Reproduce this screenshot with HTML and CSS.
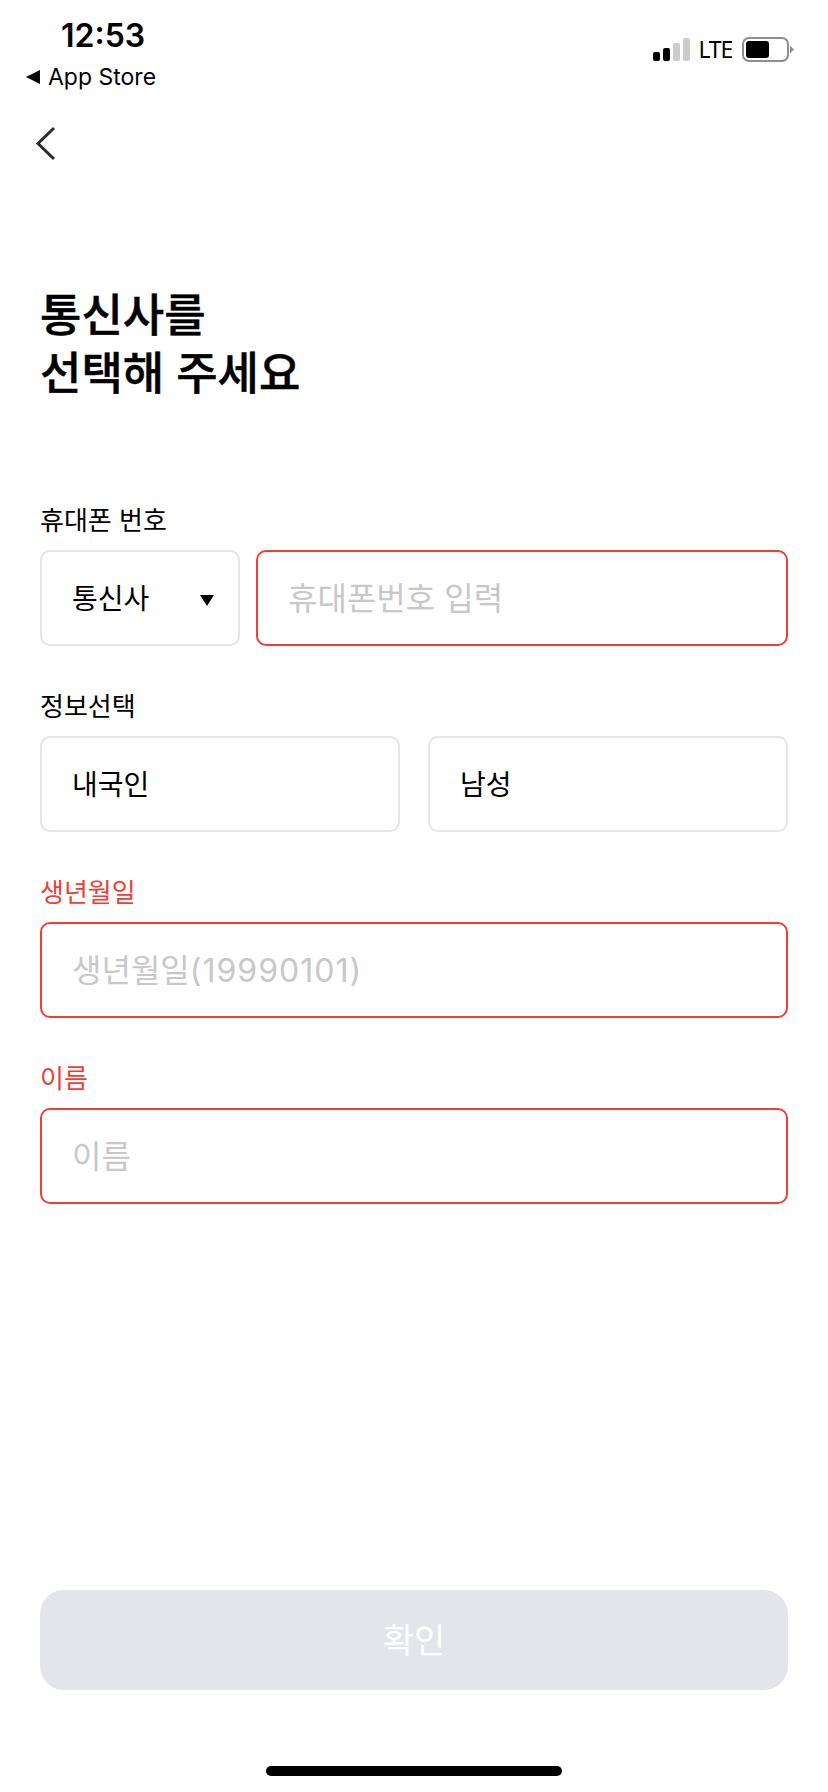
FILE: index.html
```html
<!DOCTYPE html>
<html lang="ko">
<head>
<meta charset="utf-8">
<title>통신사 선택</title>
<link rel="stylesheet" href="styles.css">
</head>
<body>
<div class="page">
  <header class="status">
    <div class="status-left">
      <div class="time">12:53</div>
      <div class="back-app"><span class="tri"></span><span>App Store</span></div>
    </div>
    <div class="status-right">
      <div class="bars"><i class="b1"></i><i class="b2"></i><i class="b3"></i><i class="b4"></i></div>
      <span class="lte">LTE</span>
      <div class="battery"><div class="level"></div></div>
      <div class="nub"></div>
    </div>
  </header>
  <nav class="nav">
    <svg class="chev" width="22" height="40" viewBox="0 0 22 40"><path d="M20 4 L4 19.5 L20 35" fill="none" stroke="#2b2b2b" stroke-width="3"/></svg>
  </nav>
  <h1 class="title">통신사를<br>선택해 주세요</h1>
  <form class="form">
    <div class="field">
      <div class="label">휴대폰 번호</div>
      <div class="row">
        <div class="box select"><span>통신사</span><span class="caret"></span></div>
        <div class="box error grow ph">휴대폰번호 입력</div>
      </div>
    </div>
    <div class="field">
      <div class="label">정보선택</div>
      <div class="row wide">
        <div class="box grow">내국인</div>
        <div class="box grow">남성</div>
      </div>
    </div>
    <div class="field">
      <div class="label red">생년월일</div>
      <div class="box error ph"><span>생년월일<span class="digits">(19990101)</span></span></div>
    </div>
    <div class="field">
      <div class="label red">이름</div>
      <div class="box error ph">이름</div>
    </div>
  </form>
  <div class="confirm">확인</div>
  <div class="home"></div>
</div>
</body>
</html>
```
FILE: styles.css
```css
* { box-sizing: border-box; }
html, body { margin: 0; padding: 0; background: #fff; }
body { font-family: Inter, "Noto Sans CJK KR", sans-serif; color: #000; }
.page { width: 828px; height: 1792px; display: flex; flex-direction: column; overflow: hidden; }

.status { height: 96px; padding: 0 34px 0 26px; display: flex; justify-content: space-between; align-items: flex-start; }
.status-left { display: flex; flex-direction: column; }
.time { font-weight: 600; font-size: 32px; line-height: 36px; margin: 18px 0 0 35px; }
.back-app { display: flex; align-items: center; gap: 8px; font-size: 23px; line-height: 28px; margin-top: 9px; }
.tri { width: 0; height: 0; border-top: 7px solid transparent; border-bottom: 7px solid transparent; border-right: 14px solid #000; }
.status-right { display: flex; align-items: center; margin-top: 37px; height: 25px; }
.bars { display: flex; align-items: flex-end; gap: 3px; height: 23px; }
.bars i { display: block; width: 7px; border-radius: 2px; }
.b1 { height: 9px; background: #000; }
.b2 { height: 13px; background: #000; }
.b3 { height: 18px; background: #ccc; }
.b4 { height: 23px; background: #ccc; }
.lte { font-family: "Noto Sans", sans-serif; font-size: 23px; letter-spacing: -1.2px; line-height: 25px; margin: 0 10px 0 8px; }
.battery { width: 47px; height: 25px; border: 2px solid #8e8e8e; border-radius: 7px; padding: 2px; }
.level { width: 23px; height: 17px; background: #000; border-radius: 3px; }
.nub { width: 4px; height: 8px; background: #8e8e8e; margin-left: 1px; clip-path: polygon(0 0, 100% 50%, 0 100%); }

.nav { height: 62px; padding: 28px 0 0 34px; }
.chev { display: block; }

.title { margin: 129px 0 0 40px; font-size: 45px; line-height: 58px; font-weight: 500; -webkit-text-stroke: 0.5px #000; height: 116px; }

.form { margin: 99px 40px 0; display: flex; flex-direction: column; gap: 42px; }
.field { display: flex; flex-direction: column; gap: 12px; }
.label { font-size: 26px; line-height: 38px; height: 36px; }
.red { color: #ee3f36; }
.row { display: flex; gap: 16px; }
.row.wide { gap: 28px; }
.box { height: 96px; border: 2px solid #e4e5ea; border-radius: 10px; display: flex; align-items: center; padding: 0 30px 3px; font-size: 28px; background: #fff; }
.grow { flex: 1 1 0; }
.select { width: 200px; flex: none; justify-content: space-between; padding-right: 24px; }
.caret { width: 0; height: 0; margin-top: 7px; border-left: 7px solid transparent; border-right: 7px solid transparent; border-top: 11px solid #000; }
.error { border-color: #ee3f36; }
.ph { color: #c8c8c8; font-size: 32px; padding-bottom: 5px; }
.digits { letter-spacing: 1px; }

.confirm { margin: auto 40px 0; height: 100px; padding-bottom: 4px; background: #e4e5ea; border-radius: 24px; color: #fff; font-size: 34px; display: flex; align-items: center; justify-content: center; }
.home { width: 296px; height: 10px; border-radius: 5px; background: #000; margin: 76px auto 16px; }
```
